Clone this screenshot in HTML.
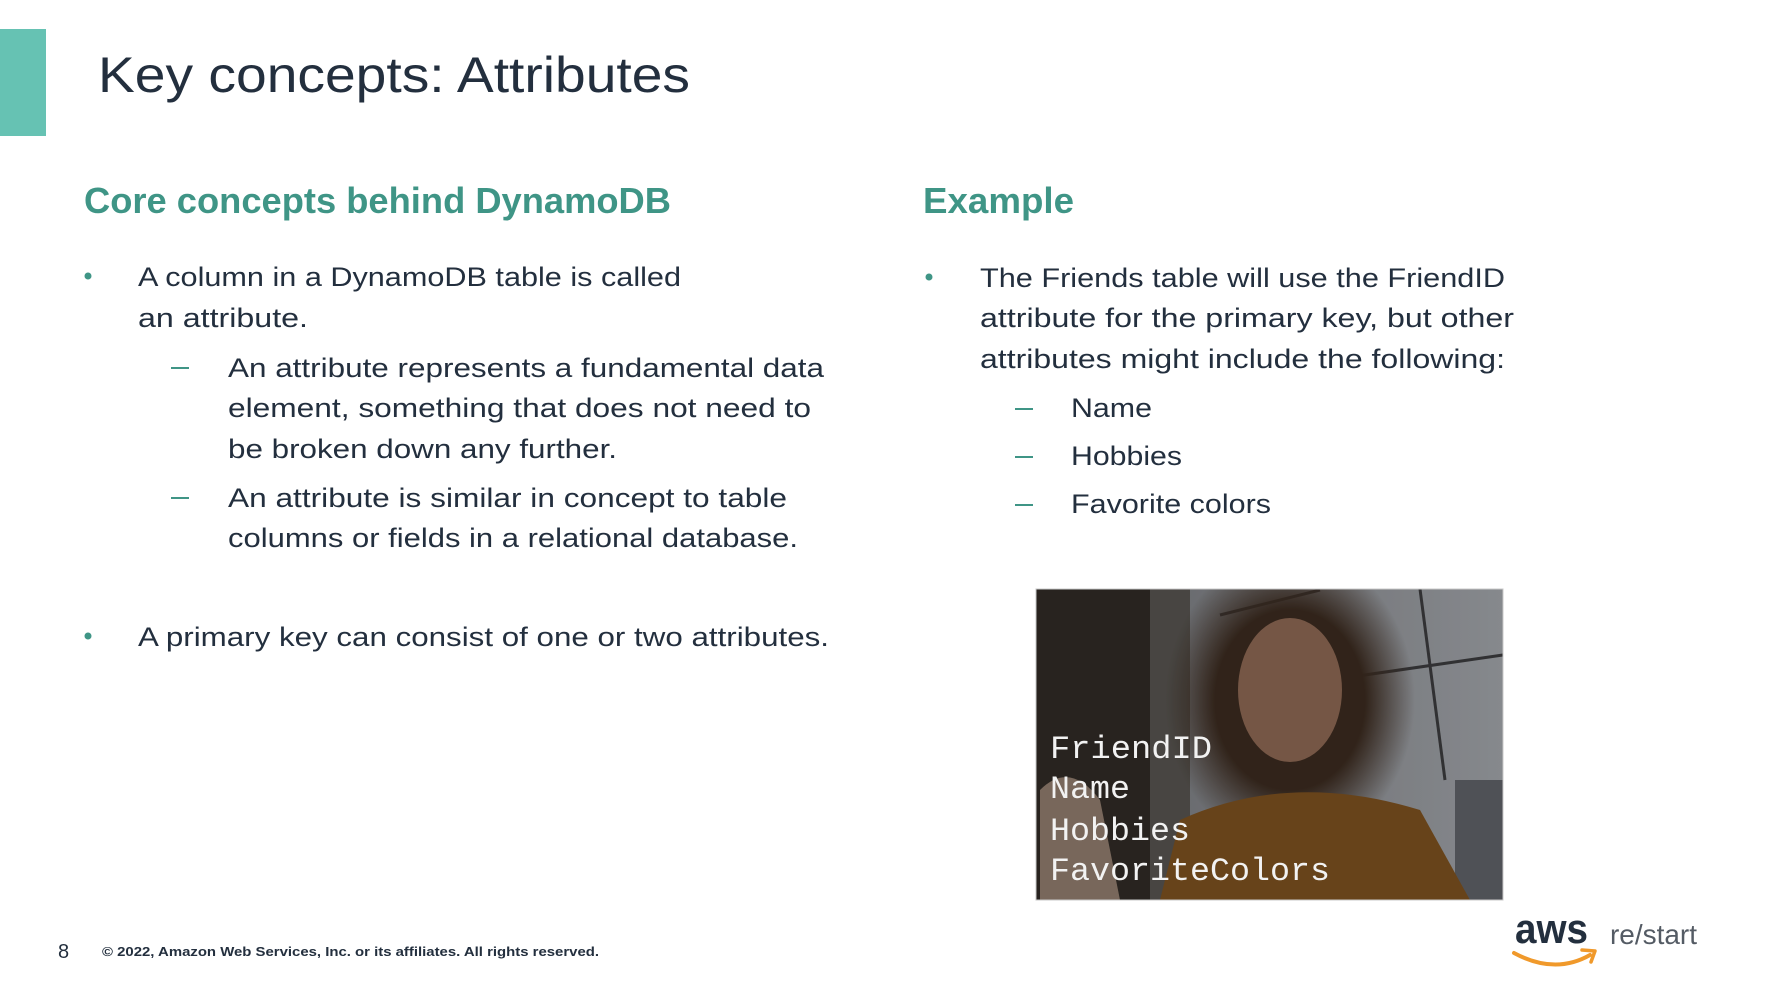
<!DOCTYPE html>
<html><head><meta charset="utf-8"><style>
html,body{margin:0;padding:0;background:#fff;}
svg{display:block;}
.t{font-family:"Liberation Sans",sans-serif;fill:#232f3e;}
</style></head><body>
<svg width="1787" height="1002" viewBox="0 0 1787 1002" xmlns="http://www.w3.org/2000/svg">
<rect width="1787" height="1002" fill="#fff"/>
<rect x="0" y="29" width="46" height="107" fill="#66c2b3"/>
<text class="t" x="98" y="92" font-size="50" textLength="592" lengthAdjust="spacingAndGlyphs">Key concepts: Attributes</text>

<g font-family="Liberation Sans,sans-serif" font-weight="bold" fill="#3f9586" font-size="36">
<text x="84" y="213" textLength="587" lengthAdjust="spacingAndGlyphs">Core concepts behind DynamoDB</text>
<text x="923" y="213" textLength="151" lengthAdjust="spacingAndGlyphs">Example</text>
</g>

<g fill="#3f9586">
<circle cx="88" cy="276" r="3.5"/>
<circle cx="88" cy="636" r="3.5"/>
<circle cx="929" cy="277" r="3.5"/>
<rect x="171" y="367" width="18" height="2"/>
<rect x="171" y="497" width="18" height="2"/>
<rect x="1015" y="408" width="18" height="2"/>
<rect x="1015" y="456" width="18" height="2"/>
<rect x="1015" y="504" width="18" height="2"/>
</g>

<g class="t" font-size="27">
<text class="t" x="138" y="286" textLength="543" lengthAdjust="spacingAndGlyphs">A column in a DynamoDB table is called</text>
<text class="t" x="138" y="327" textLength="170" lengthAdjust="spacingAndGlyphs">an attribute.</text>
<text class="t" x="228" y="377" textLength="596" lengthAdjust="spacingAndGlyphs">An attribute represents a fundamental data</text>
<text class="t" x="228" y="417" textLength="583" lengthAdjust="spacingAndGlyphs">element, something that does not need to</text>
<text class="t" x="228" y="458" textLength="389" lengthAdjust="spacingAndGlyphs">be broken down any further.</text>
<text class="t" x="228" y="507" textLength="559" lengthAdjust="spacingAndGlyphs">An attribute is similar in concept to table</text>
<text class="t" x="228" y="547" textLength="570" lengthAdjust="spacingAndGlyphs">columns or fields in a relational database.</text>
<text class="t" x="138" y="646" textLength="691" lengthAdjust="spacingAndGlyphs">A primary key can consist of one or two attributes.</text>

<text class="t" x="980" y="287" textLength="525" lengthAdjust="spacingAndGlyphs">The Friends table will use the FriendID</text>
<text class="t" x="980" y="327" textLength="534" lengthAdjust="spacingAndGlyphs">attribute for the primary key, but other</text>
<text class="t" x="980" y="368" textLength="525" lengthAdjust="spacingAndGlyphs">attributes might include the following:</text>
<text class="t" x="1071" y="417" textLength="81" lengthAdjust="spacingAndGlyphs">Name</text>
<text class="t" x="1071" y="465" textLength="111" lengthAdjust="spacingAndGlyphs">Hobbies</text>
<text class="t" x="1071" y="513" textLength="200" lengthAdjust="spacingAndGlyphs">Favorite colors</text>
</g>

<!-- photo -->
<defs>
<clipPath id="pc"><rect x="1036" y="589" width="467" height="311"/></clipPath>
<linearGradient id="win" x1="0" y1="0" x2="1" y2="0"><stop offset="0" stop-color="#6e7074"/><stop offset="1" stop-color="#9ea1a6"/></linearGradient>
<radialGradient id="hair" cx="0.5" cy="0.5" r="0.5"><stop offset="0.6" stop-color="#3a2a1f"/><stop offset="1" stop-color="#3a2a1f" stop-opacity="0"/></radialGradient>
</defs>
<g clip-path="url(#pc)">
<rect x="1036" y="589" width="467" height="311" fill="url(#win)"/>
<rect x="1036" y="589" width="120" height="311" fill="#2f2a25"/>
<rect x="1150" y="589" width="40" height="311" fill="#55524e"/>
<g stroke="#3a3a3c" stroke-width="3">
<line x1="1420" y1="589" x2="1445" y2="780"/>
<line x1="1330" y1="680" x2="1503" y2="655"/>
<line x1="1220" y1="615" x2="1320" y2="590"/>
</g>
<ellipse cx="1290" cy="700" rx="125" ry="150" fill="url(#hair)"/>
<ellipse cx="1290" cy="690" rx="52" ry="72" fill="#8a6652"/>
<rect x="1455" y="780" width="48" height="120" fill="#5d6066"/>
<path d="M1160 900 L1180 820 Q1290 770 1420 810 L1470 900 Z" fill="#7a4f1f"/>
<path d="M1040 790 Q1070 760 1100 800 L1120 900 L1040 900 Z" fill="#8d7a6c"/>
<rect x="1036" y="589" width="467" height="311" fill="#000" opacity="0.15"/>
</g>
<rect x="1036" y="589" width="467" height="311" fill="none" stroke="#c8c8c8" stroke-width="1"/>
<g font-family="Liberation Mono,monospace" font-size="32" fill="#f2f2f2">
<text x="1050" y="758" textLength="162" lengthAdjust="spacingAndGlyphs">FriendID</text>
<text x="1050" y="798" textLength="80" lengthAdjust="spacingAndGlyphs">Name</text>
<text x="1050" y="840" textLength="140" lengthAdjust="spacingAndGlyphs">Hobbies</text>
<text x="1050" y="880" textLength="280" lengthAdjust="spacingAndGlyphs">FavoriteColors</text>
</g>

<!-- footer -->
<text x="58" y="958" font-family="Liberation Sans,sans-serif" font-size="20" fill="#232f3e">8</text>
<text x="102" y="956" font-family="Liberation Sans,sans-serif" font-weight="bold" font-size="13" fill="#232f3e" textLength="497" lengthAdjust="spacingAndGlyphs">© 2022, Amazon Web Services, Inc. or its affiliates. All rights reserved.</text>

<!-- aws logo -->
<text x="1515" y="943" font-family="Liberation Sans,sans-serif" font-weight="bold" font-size="42" fill="#232f3e" textLength="73" lengthAdjust="spacingAndGlyphs">aws</text>
<path d="M1514 953 Q1555 975 1590 955" fill="none" stroke="#f0992b" stroke-width="4" stroke-linecap="round"/>
<path d="M1582 950 L1595 951 L1591 962" fill="none" stroke="#f0992b" stroke-width="3.5" stroke-linecap="round" stroke-linejoin="round"/>
<text x="1610" y="944" font-family="Liberation Sans,sans-serif" font-size="28" fill="#545b64" textLength="87" lengthAdjust="spacingAndGlyphs">re/start</text>
</svg>
</body></html>
